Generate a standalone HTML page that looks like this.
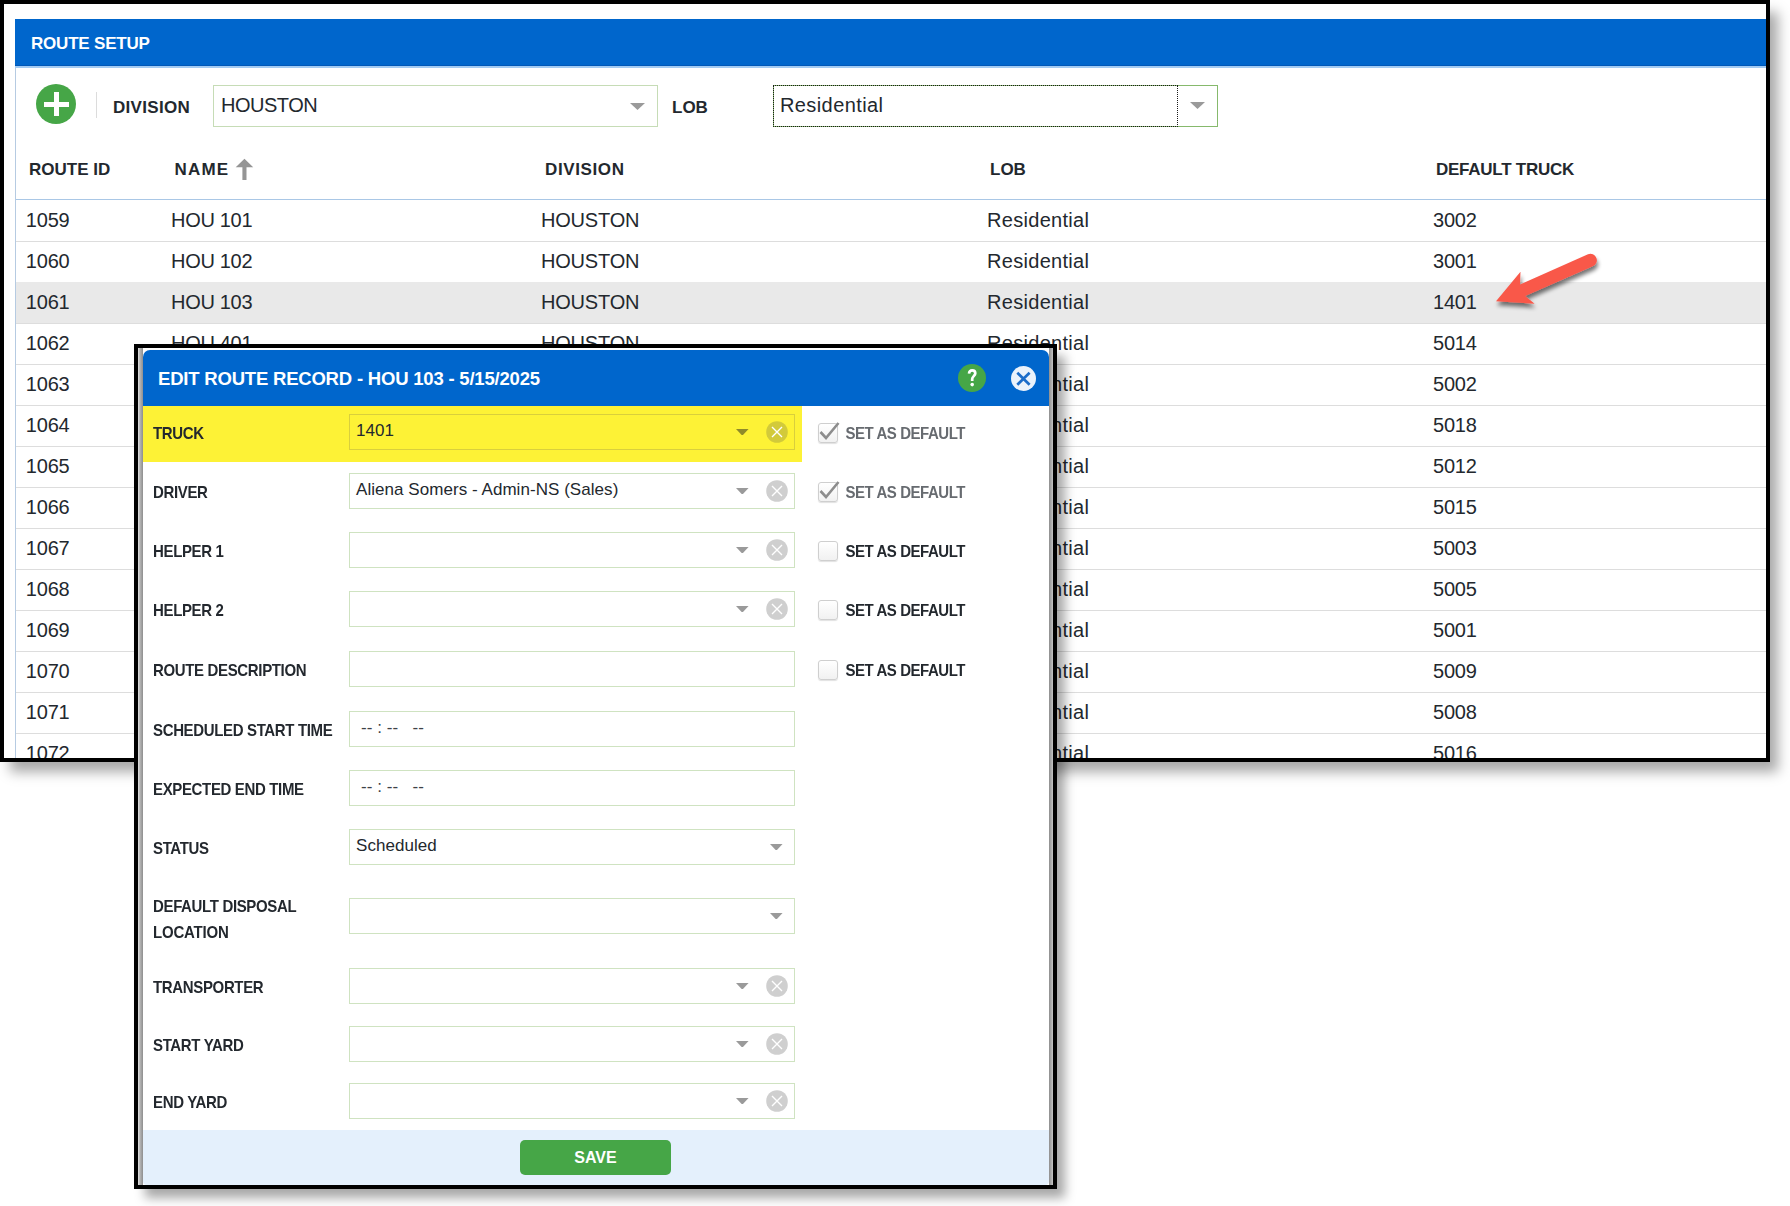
<!DOCTYPE html><html><head><meta charset="utf-8"><style>
html,body{margin:0;padding:0;background:#fff;width:1790px;height:1206px;overflow:hidden;font-family:"Liberation Sans", sans-serif;}
.frame{position:absolute;box-sizing:border-box;border:4px solid #000;background:#fff;overflow:hidden;}
.inner{position:absolute;}
</style></head><body>
<div class="frame" style="left:0;top:0;width:1770px;height:762px;box-shadow:9px 11px 12px -1px rgba(0,0,0,.34)">
<div class="inner" style="left:-4px;top:-4px;width:1790px;height:800px">
<div style="position:absolute;left:15px;top:19px;width:1760px;height:47px;background:#0066cc"></div>
<div style="position:absolute;left:15px;top:65px;width:1760px;height:1px;background:#0058b8"></div><div style="position:absolute;left:15px;top:66px;width:1760px;height:2px;background:#a3cbf3"></div>
<div style="position:absolute;left:15px;top:68px;width:1px;height:700px;background:#b6cbe2"></div>
<div style="position:absolute;left:31px;top:23.5px;height:40px;line-height:40px;font-size:17px;font-weight:bold;color:#fff;letter-spacing:-0.2px;white-space:pre;">ROUTE SETUP</div>
<div style="position:absolute;left:36px;top:84px;width:40px;height:40px;border-radius:50%;background:#46a647"></div>
<div style="position:absolute;left:44px;top:101.5px;width:25px;height:5px;background:#fff"></div>
<div style="position:absolute;left:53.5px;top:92px;width:5px;height:24px;background:#fff"></div>
<div style="position:absolute;left:96px;top:92px;width:1px;height:26px;background:#dcdcdc"></div>
<div style="position:absolute;left:113px;top:87.5px;height:40px;line-height:40px;font-size:17px;font-weight:bold;color:#23282e;letter-spacing:0.3px;white-space:pre;">DIVISION</div>
<div style="position:absolute;left:213px;top:85px;width:445px;height:42px;box-sizing:border-box;border:1px solid #c6dcb6"></div>
<div style="position:absolute;left:221px;top:84.8px;height:40px;line-height:40px;font-size:20px;font-weight:normal;color:#23282e;letter-spacing:-0.5px;white-space:pre;">HOUSTON</div>
<svg style="position:absolute;left:630px;top:102.5px" width="15" height="7.0" viewBox="0 0 15 7.0"><path d="M0 0H15L7.5 7.0Z" fill="#9a9a9a"/></svg>
<div style="position:absolute;left:672px;top:87.7px;height:40px;line-height:40px;font-size:17px;font-weight:bold;color:#23282e;letter-spacing:0px;white-space:pre;">LOB</div>
<div style="position:absolute;left:773px;top:85px;width:445px;height:42px;box-sizing:border-box;border:1px solid #86b96c"></div>
<div style="position:absolute;left:773px;top:85px;width:405px;height:42px;box-sizing:border-box;border:1px dotted #1a1a1a"></div>
<div style="position:absolute;left:780px;top:84.9px;height:40px;line-height:40px;font-size:20px;font-weight:normal;color:#23282e;letter-spacing:0.4px;white-space:pre;">Residential</div>
<svg style="position:absolute;left:1190px;top:102.3px" width="15" height="7.0" viewBox="0 0 15 7.0"><path d="M0 0H15L7.5 7.0Z" fill="#9a9a9a"/></svg>
<div style="position:absolute;left:29px;top:150.4px;height:40px;line-height:40px;font-size:17px;font-weight:bold;color:#23282e;letter-spacing:0px;white-space:pre;">ROUTE ID</div>
<div style="position:absolute;left:174.5px;top:150.4px;height:40px;line-height:40px;font-size:17px;font-weight:bold;color:#23282e;letter-spacing:1.2px;white-space:pre;">NAME</div>
<div style="position:absolute;left:545px;top:150.4px;height:40px;line-height:40px;font-size:17px;font-weight:bold;color:#23282e;letter-spacing:0.62px;white-space:pre;">DIVISION</div>
<div style="position:absolute;left:990px;top:150.4px;height:40px;line-height:40px;font-size:17px;font-weight:bold;color:#23282e;letter-spacing:0px;white-space:pre;">LOB</div>
<div style="position:absolute;left:1436px;top:150.4px;height:40px;line-height:40px;font-size:17px;font-weight:bold;color:#23282e;letter-spacing:-0.25px;white-space:pre;">DEFAULT TRUCK</div>
<svg style="position:absolute;left:235px;top:158px" width="19" height="23" viewBox="0 0 19 23"><path d="M9.45 0.8L18.2 9.3H11.5V21.9H7.4V9.3H0.7Z" fill="#959595"/></svg>
<div style="position:absolute;left:16px;top:199px;width:1760px;height:1px;background:#a9c7e6"></div>
<div style="position:absolute;left:16px;top:241px;width:1760px;height:1px;background:#dddddd"></div>
<div style="position:absolute;left:25.8px;top:200.0px;height:40px;line-height:40px;font-size:20px;font-weight:normal;color:#23282e;letter-spacing:-0.2px;white-space:pre;">1059</div>
<div style="position:absolute;left:171px;top:200.0px;height:40px;line-height:40px;font-size:20px;font-weight:normal;color:#23282e;letter-spacing:-0.3px;white-space:pre;">HOU 101</div>
<div style="position:absolute;left:541px;top:200.0px;height:40px;line-height:40px;font-size:20px;font-weight:normal;color:#23282e;letter-spacing:-0.2px;white-space:pre;">HOUSTON</div>
<div style="position:absolute;left:987px;top:200.0px;height:40px;line-height:40px;font-size:20px;font-weight:normal;color:#23282e;letter-spacing:0.3px;white-space:pre;">Residential</div>
<div style="position:absolute;left:1433px;top:200.0px;height:40px;line-height:40px;font-size:20px;font-weight:normal;color:#23282e;letter-spacing:-0.2px;white-space:pre;">3002</div>
<div style="position:absolute;left:16px;top:282px;width:1760px;height:1px;background:#dddddd"></div>
<div style="position:absolute;left:25.8px;top:241.0px;height:40px;line-height:40px;font-size:20px;font-weight:normal;color:#23282e;letter-spacing:-0.2px;white-space:pre;">1060</div>
<div style="position:absolute;left:171px;top:241.0px;height:40px;line-height:40px;font-size:20px;font-weight:normal;color:#23282e;letter-spacing:-0.3px;white-space:pre;">HOU 102</div>
<div style="position:absolute;left:541px;top:241.0px;height:40px;line-height:40px;font-size:20px;font-weight:normal;color:#23282e;letter-spacing:-0.2px;white-space:pre;">HOUSTON</div>
<div style="position:absolute;left:987px;top:241.0px;height:40px;line-height:40px;font-size:20px;font-weight:normal;color:#23282e;letter-spacing:0.3px;white-space:pre;">Residential</div>
<div style="position:absolute;left:1433px;top:241.0px;height:40px;line-height:40px;font-size:20px;font-weight:normal;color:#23282e;letter-spacing:-0.2px;white-space:pre;">3001</div>
<div style="position:absolute;left:16px;top:282px;width:1760px;height:41px;background:#e9e9e9"></div>
<div style="position:absolute;left:16px;top:323px;width:1760px;height:1px;background:#dddddd"></div>
<div style="position:absolute;left:25.8px;top:282.0px;height:40px;line-height:40px;font-size:20px;font-weight:normal;color:#23282e;letter-spacing:-0.2px;white-space:pre;">1061</div>
<div style="position:absolute;left:171px;top:282.0px;height:40px;line-height:40px;font-size:20px;font-weight:normal;color:#23282e;letter-spacing:-0.3px;white-space:pre;">HOU 103</div>
<div style="position:absolute;left:541px;top:282.0px;height:40px;line-height:40px;font-size:20px;font-weight:normal;color:#23282e;letter-spacing:-0.2px;white-space:pre;">HOUSTON</div>
<div style="position:absolute;left:987px;top:282.0px;height:40px;line-height:40px;font-size:20px;font-weight:normal;color:#23282e;letter-spacing:0.3px;white-space:pre;">Residential</div>
<div style="position:absolute;left:1433px;top:282.0px;height:40px;line-height:40px;font-size:20px;font-weight:normal;color:#23282e;letter-spacing:-0.2px;white-space:pre;">1401</div>
<div style="position:absolute;left:16px;top:364px;width:1760px;height:1px;background:#dddddd"></div>
<div style="position:absolute;left:25.8px;top:323.0px;height:40px;line-height:40px;font-size:20px;font-weight:normal;color:#23282e;letter-spacing:-0.2px;white-space:pre;">1062</div>
<div style="position:absolute;left:171px;top:323.0px;height:40px;line-height:40px;font-size:20px;font-weight:normal;color:#23282e;letter-spacing:-0.3px;white-space:pre;">HOU 401</div>
<div style="position:absolute;left:541px;top:323.0px;height:40px;line-height:40px;font-size:20px;font-weight:normal;color:#23282e;letter-spacing:-0.2px;white-space:pre;">HOUSTON</div>
<div style="position:absolute;left:987px;top:323.0px;height:40px;line-height:40px;font-size:20px;font-weight:normal;color:#23282e;letter-spacing:0.3px;white-space:pre;">Residential</div>
<div style="position:absolute;left:1433px;top:323.0px;height:40px;line-height:40px;font-size:20px;font-weight:normal;color:#23282e;letter-spacing:-0.2px;white-space:pre;">5014</div>
<div style="position:absolute;left:16px;top:405px;width:1760px;height:1px;background:#dddddd"></div>
<div style="position:absolute;left:25.8px;top:364.0px;height:40px;line-height:40px;font-size:20px;font-weight:normal;color:#23282e;letter-spacing:-0.2px;white-space:pre;">1063</div>
<div style="position:absolute;left:171px;top:364.0px;height:40px;line-height:40px;font-size:20px;font-weight:normal;color:#23282e;letter-spacing:-0.3px;white-space:pre;">HOU 402</div>
<div style="position:absolute;left:541px;top:364.0px;height:40px;line-height:40px;font-size:20px;font-weight:normal;color:#23282e;letter-spacing:-0.2px;white-space:pre;">HOUSTON</div>
<div style="position:absolute;left:987px;top:364.0px;height:40px;line-height:40px;font-size:20px;font-weight:normal;color:#23282e;letter-spacing:0.3px;white-space:pre;">Residential</div>
<div style="position:absolute;left:1433px;top:364.0px;height:40px;line-height:40px;font-size:20px;font-weight:normal;color:#23282e;letter-spacing:-0.2px;white-space:pre;">5002</div>
<div style="position:absolute;left:16px;top:446px;width:1760px;height:1px;background:#dddddd"></div>
<div style="position:absolute;left:25.8px;top:405.0px;height:40px;line-height:40px;font-size:20px;font-weight:normal;color:#23282e;letter-spacing:-0.2px;white-space:pre;">1064</div>
<div style="position:absolute;left:171px;top:405.0px;height:40px;line-height:40px;font-size:20px;font-weight:normal;color:#23282e;letter-spacing:-0.3px;white-space:pre;">HOU 403</div>
<div style="position:absolute;left:541px;top:405.0px;height:40px;line-height:40px;font-size:20px;font-weight:normal;color:#23282e;letter-spacing:-0.2px;white-space:pre;">HOUSTON</div>
<div style="position:absolute;left:987px;top:405.0px;height:40px;line-height:40px;font-size:20px;font-weight:normal;color:#23282e;letter-spacing:0.3px;white-space:pre;">Residential</div>
<div style="position:absolute;left:1433px;top:405.0px;height:40px;line-height:40px;font-size:20px;font-weight:normal;color:#23282e;letter-spacing:-0.2px;white-space:pre;">5018</div>
<div style="position:absolute;left:16px;top:487px;width:1760px;height:1px;background:#dddddd"></div>
<div style="position:absolute;left:25.8px;top:446.0px;height:40px;line-height:40px;font-size:20px;font-weight:normal;color:#23282e;letter-spacing:-0.2px;white-space:pre;">1065</div>
<div style="position:absolute;left:171px;top:446.0px;height:40px;line-height:40px;font-size:20px;font-weight:normal;color:#23282e;letter-spacing:-0.3px;white-space:pre;">HOU 404</div>
<div style="position:absolute;left:541px;top:446.0px;height:40px;line-height:40px;font-size:20px;font-weight:normal;color:#23282e;letter-spacing:-0.2px;white-space:pre;">HOUSTON</div>
<div style="position:absolute;left:987px;top:446.0px;height:40px;line-height:40px;font-size:20px;font-weight:normal;color:#23282e;letter-spacing:0.3px;white-space:pre;">Residential</div>
<div style="position:absolute;left:1433px;top:446.0px;height:40px;line-height:40px;font-size:20px;font-weight:normal;color:#23282e;letter-spacing:-0.2px;white-space:pre;">5012</div>
<div style="position:absolute;left:16px;top:528px;width:1760px;height:1px;background:#dddddd"></div>
<div style="position:absolute;left:25.8px;top:487.0px;height:40px;line-height:40px;font-size:20px;font-weight:normal;color:#23282e;letter-spacing:-0.2px;white-space:pre;">1066</div>
<div style="position:absolute;left:171px;top:487.0px;height:40px;line-height:40px;font-size:20px;font-weight:normal;color:#23282e;letter-spacing:-0.3px;white-space:pre;">HOU 405</div>
<div style="position:absolute;left:541px;top:487.0px;height:40px;line-height:40px;font-size:20px;font-weight:normal;color:#23282e;letter-spacing:-0.2px;white-space:pre;">HOUSTON</div>
<div style="position:absolute;left:987px;top:487.0px;height:40px;line-height:40px;font-size:20px;font-weight:normal;color:#23282e;letter-spacing:0.3px;white-space:pre;">Residential</div>
<div style="position:absolute;left:1433px;top:487.0px;height:40px;line-height:40px;font-size:20px;font-weight:normal;color:#23282e;letter-spacing:-0.2px;white-space:pre;">5015</div>
<div style="position:absolute;left:16px;top:569px;width:1760px;height:1px;background:#dddddd"></div>
<div style="position:absolute;left:25.8px;top:528.0px;height:40px;line-height:40px;font-size:20px;font-weight:normal;color:#23282e;letter-spacing:-0.2px;white-space:pre;">1067</div>
<div style="position:absolute;left:171px;top:528.0px;height:40px;line-height:40px;font-size:20px;font-weight:normal;color:#23282e;letter-spacing:-0.3px;white-space:pre;">HOU 406</div>
<div style="position:absolute;left:541px;top:528.0px;height:40px;line-height:40px;font-size:20px;font-weight:normal;color:#23282e;letter-spacing:-0.2px;white-space:pre;">HOUSTON</div>
<div style="position:absolute;left:987px;top:528.0px;height:40px;line-height:40px;font-size:20px;font-weight:normal;color:#23282e;letter-spacing:0.3px;white-space:pre;">Residential</div>
<div style="position:absolute;left:1433px;top:528.0px;height:40px;line-height:40px;font-size:20px;font-weight:normal;color:#23282e;letter-spacing:-0.2px;white-space:pre;">5003</div>
<div style="position:absolute;left:16px;top:610px;width:1760px;height:1px;background:#dddddd"></div>
<div style="position:absolute;left:25.8px;top:569.0px;height:40px;line-height:40px;font-size:20px;font-weight:normal;color:#23282e;letter-spacing:-0.2px;white-space:pre;">1068</div>
<div style="position:absolute;left:171px;top:569.0px;height:40px;line-height:40px;font-size:20px;font-weight:normal;color:#23282e;letter-spacing:-0.3px;white-space:pre;">HOU 407</div>
<div style="position:absolute;left:541px;top:569.0px;height:40px;line-height:40px;font-size:20px;font-weight:normal;color:#23282e;letter-spacing:-0.2px;white-space:pre;">HOUSTON</div>
<div style="position:absolute;left:987px;top:569.0px;height:40px;line-height:40px;font-size:20px;font-weight:normal;color:#23282e;letter-spacing:0.3px;white-space:pre;">Residential</div>
<div style="position:absolute;left:1433px;top:569.0px;height:40px;line-height:40px;font-size:20px;font-weight:normal;color:#23282e;letter-spacing:-0.2px;white-space:pre;">5005</div>
<div style="position:absolute;left:16px;top:651px;width:1760px;height:1px;background:#dddddd"></div>
<div style="position:absolute;left:25.8px;top:610.0px;height:40px;line-height:40px;font-size:20px;font-weight:normal;color:#23282e;letter-spacing:-0.2px;white-space:pre;">1069</div>
<div style="position:absolute;left:171px;top:610.0px;height:40px;line-height:40px;font-size:20px;font-weight:normal;color:#23282e;letter-spacing:-0.3px;white-space:pre;">HOU 408</div>
<div style="position:absolute;left:541px;top:610.0px;height:40px;line-height:40px;font-size:20px;font-weight:normal;color:#23282e;letter-spacing:-0.2px;white-space:pre;">HOUSTON</div>
<div style="position:absolute;left:987px;top:610.0px;height:40px;line-height:40px;font-size:20px;font-weight:normal;color:#23282e;letter-spacing:0.3px;white-space:pre;">Residential</div>
<div style="position:absolute;left:1433px;top:610.0px;height:40px;line-height:40px;font-size:20px;font-weight:normal;color:#23282e;letter-spacing:-0.2px;white-space:pre;">5001</div>
<div style="position:absolute;left:16px;top:692px;width:1760px;height:1px;background:#dddddd"></div>
<div style="position:absolute;left:25.8px;top:651.0px;height:40px;line-height:40px;font-size:20px;font-weight:normal;color:#23282e;letter-spacing:-0.2px;white-space:pre;">1070</div>
<div style="position:absolute;left:171px;top:651.0px;height:40px;line-height:40px;font-size:20px;font-weight:normal;color:#23282e;letter-spacing:-0.3px;white-space:pre;">HOU 409</div>
<div style="position:absolute;left:541px;top:651.0px;height:40px;line-height:40px;font-size:20px;font-weight:normal;color:#23282e;letter-spacing:-0.2px;white-space:pre;">HOUSTON</div>
<div style="position:absolute;left:987px;top:651.0px;height:40px;line-height:40px;font-size:20px;font-weight:normal;color:#23282e;letter-spacing:0.3px;white-space:pre;">Residential</div>
<div style="position:absolute;left:1433px;top:651.0px;height:40px;line-height:40px;font-size:20px;font-weight:normal;color:#23282e;letter-spacing:-0.2px;white-space:pre;">5009</div>
<div style="position:absolute;left:16px;top:733px;width:1760px;height:1px;background:#dddddd"></div>
<div style="position:absolute;left:25.8px;top:692.0px;height:40px;line-height:40px;font-size:20px;font-weight:normal;color:#23282e;letter-spacing:-0.2px;white-space:pre;">1071</div>
<div style="position:absolute;left:171px;top:692.0px;height:40px;line-height:40px;font-size:20px;font-weight:normal;color:#23282e;letter-spacing:-0.3px;white-space:pre;">HOU 410</div>
<div style="position:absolute;left:541px;top:692.0px;height:40px;line-height:40px;font-size:20px;font-weight:normal;color:#23282e;letter-spacing:-0.2px;white-space:pre;">HOUSTON</div>
<div style="position:absolute;left:987px;top:692.0px;height:40px;line-height:40px;font-size:20px;font-weight:normal;color:#23282e;letter-spacing:0.3px;white-space:pre;">Residential</div>
<div style="position:absolute;left:1433px;top:692.0px;height:40px;line-height:40px;font-size:20px;font-weight:normal;color:#23282e;letter-spacing:-0.2px;white-space:pre;">5008</div>
<div style="position:absolute;left:16px;top:774px;width:1760px;height:1px;background:#dddddd"></div>
<div style="position:absolute;left:25.8px;top:733.0px;height:40px;line-height:40px;font-size:20px;font-weight:normal;color:#23282e;letter-spacing:-0.2px;white-space:pre;">1072</div>
<div style="position:absolute;left:171px;top:733.0px;height:40px;line-height:40px;font-size:20px;font-weight:normal;color:#23282e;letter-spacing:-0.3px;white-space:pre;">HOU 411</div>
<div style="position:absolute;left:541px;top:733.0px;height:40px;line-height:40px;font-size:20px;font-weight:normal;color:#23282e;letter-spacing:-0.2px;white-space:pre;">HOUSTON</div>
<div style="position:absolute;left:987px;top:733.0px;height:40px;line-height:40px;font-size:20px;font-weight:normal;color:#23282e;letter-spacing:0.3px;white-space:pre;">Residential</div>
<div style="position:absolute;left:1433px;top:733.0px;height:40px;line-height:40px;font-size:20px;font-weight:normal;color:#23282e;letter-spacing:-0.2px;white-space:pre;">5016</div>
<svg style="position:absolute;left:1480px;top:240px" width="130" height="85" viewBox="1480 240 130 85">
<defs><filter id="ds" x="-30%" y="-30%" width="160%" height="160%"><feGaussianBlur in="SourceAlpha" stdDeviation="2.2"/><feOffset dx="1" dy="4"/><feComponentTransfer><feFuncA type="linear" slope="0.55"/></feComponentTransfer><feMerge><feMergeNode/><feMergeNode in="SourceGraphic"/></feMerge></filter></defs>
<path filter="url(#ds)" d="M1496 301.3 L1520.5 271.8 L1520 284.6 L1588 254.3 A6.4 6.4 0 0 1 1592.8 266.3 L1525.2 296 L1534.6 303.7 Z" fill="#f9584a"/>
</svg>
</div></div>
<div class="frame" style="left:134px;top:344px;width:923px;height:845px;box-shadow:9.5px 10.5px 10px -1.5px rgba(0,0,0,.34)">
<div class="inner" style="left:-138px;top:-348px;width:1790px;height:1206px">
<div style="position:absolute;left:138px;top:348px;width:5px;height:840px;background:linear-gradient(90deg,#e2e2e2,#b5b5b5 40%,#8e8e8e)"></div>
<div style="position:absolute;left:1049px;top:348px;width:5px;height:840px;background:linear-gradient(90deg,#8e8e8e,#b5b5b5 60%,#d8d8d8)"></div>
<div style="position:absolute;left:143px;top:350px;width:906px;height:840px;background:#fff"></div>
<div style="position:absolute;left:143px;top:350px;width:906px;height:56px;background:#0066cc;border-radius:7px 7px 0 0"></div>
<div style="position:absolute;left:158px;top:359.0px;height:40px;line-height:40px;font-size:18.5px;font-weight:bold;color:#fff;letter-spacing:-0.2px;white-space:pre;">EDIT ROUTE RECORD - HOU 103 - 5/15/2025</div>
<div style="position:absolute;left:958px;top:363.6px;width:28px;height:28px;border-radius:50%;background:#46a647"></div>
<svg style="position:absolute;left:958px;top:363.6px" width="28" height="28" viewBox="958 363.6 28 28"><path d="M969 373.2C969.2 371 970.5 369.9 972.2 369.9C974.1 369.9 975.3 371.2 975.3 372.9C975.3 375.5 972.2 376 972.2 378.6V380.6" stroke="#fff" stroke-width="2.7" fill="none" stroke-linecap="butt"/><circle cx="972.2" cy="384.2" r="1.8" fill="#fff"/></svg>
<svg style="position:absolute;left:1011px;top:365.5px" width="25" height="25" viewBox="0 0 25 25"><circle cx="12.5" cy="12.5" r="12.5" fill="#eaf2fb"/><path d="M6.3 6.7L18.6 18.7M18.6 6.7L6.3 18.7" stroke="#1b6cc9" stroke-width="2.7"/></svg>
<div style="position:absolute;left:143px;top:406px;width:659px;height:56px;background:#fdf236"></div>
<div style="position:absolute;left:153px;top:412.5px;height:40px;line-height:40px;font-size:15px;font-weight:bold;color:#23282e;letter-spacing:-0.35px;white-space:pre;transform:scaleY(1.1)">TRUCK</div>
<div style="position:absolute;left:349px;top:414px;width:446px;height:36px;box-sizing:border-box;border:1px solid #d9cf3c;background:transparent"></div>
<div style="position:absolute;left:356px;top:410.5px;height:40px;line-height:40px;font-size:17px;font-weight:normal;color:#23282e;letter-spacing:0.05px;white-space:pre;">1401</div>
<svg style="position:absolute;left:736px;top:428.8px" width="12.600000000000023" height="6.699999999999989" viewBox="0 0 12.600000000000023 6.699999999999989"><path d="M0 0H12.600000000000023L6.300000000000011 6.699999999999989Z" fill="#8f8a2a"/></svg>
<svg style="position:absolute;left:766px;top:421.4px" width="22" height="22" viewBox="0 0 22 22"><circle cx="11" cy="11" r="10.8" fill="#d2ca3a"/><path d="M6 6L16 16M16 6L6 16" stroke="#fff" stroke-width="1.35"/></svg>
<div style="position:absolute;left:818px;top:422.5px;width:20px;height:20px;box-sizing:border-box;border:1px solid #cfcfcf;border-radius:3px;background:linear-gradient(#fff,#f1f1f1);box-shadow:0 1px 1px rgba(0,0,0,.12)"></div>
<svg style="position:absolute;left:817px;top:419.0px" width="24" height="24" viewBox="0 0 24 24"><path d="M3.5 13L9 19L21.5 4" stroke="#8d8d8d" stroke-width="2.6" fill="none"/></svg>
<div style="position:absolute;left:845.5px;top:412.7px;height:40px;line-height:40px;font-size:15px;font-weight:bold;color:#676b70;letter-spacing:-0.45px;white-space:pre;transform:scaleY(1.1)">SET AS DEFAULT</div>
<div style="position:absolute;left:153px;top:471.5px;height:40px;line-height:40px;font-size:15px;font-weight:bold;color:#23282e;letter-spacing:-0.35px;white-space:pre;transform:scaleY(1.1)">DRIVER</div>
<div style="position:absolute;left:349px;top:473px;width:446px;height:36px;box-sizing:border-box;border:1px solid #cfe3c1;background:#fff"></div>
<div style="position:absolute;left:356px;top:469.5px;height:40px;line-height:40px;font-size:17px;font-weight:normal;color:#23282e;letter-spacing:0.05px;white-space:pre;">Aliena Somers - Admin-NS (Sales)</div>
<svg style="position:absolute;left:736px;top:487.8px" width="12.600000000000023" height="6.699999999999989" viewBox="0 0 12.600000000000023 6.699999999999989"><path d="M0 0H12.600000000000023L6.300000000000011 6.699999999999989Z" fill="#9a9a9a"/></svg>
<svg style="position:absolute;left:766px;top:480.4px" width="22" height="22" viewBox="0 0 22 22"><circle cx="11" cy="11" r="10.8" fill="#cfcfcf"/><path d="M6 6L16 16M16 6L6 16" stroke="#fff" stroke-width="1.35"/></svg>
<div style="position:absolute;left:818px;top:481.5px;width:20px;height:20px;box-sizing:border-box;border:1px solid #cfcfcf;border-radius:3px;background:linear-gradient(#fff,#f1f1f1);box-shadow:0 1px 1px rgba(0,0,0,.12)"></div>
<svg style="position:absolute;left:817px;top:478.0px" width="24" height="24" viewBox="0 0 24 24"><path d="M3.5 13L9 19L21.5 4" stroke="#8d8d8d" stroke-width="2.6" fill="none"/></svg>
<div style="position:absolute;left:845.5px;top:471.7px;height:40px;line-height:40px;font-size:15px;font-weight:bold;color:#676b70;letter-spacing:-0.45px;white-space:pre;transform:scaleY(1.1)">SET AS DEFAULT</div>
<div style="position:absolute;left:153px;top:530.5px;height:40px;line-height:40px;font-size:15px;font-weight:bold;color:#23282e;letter-spacing:-0.35px;white-space:pre;transform:scaleY(1.1)">HELPER 1</div>
<div style="position:absolute;left:349px;top:532px;width:446px;height:36px;box-sizing:border-box;border:1px solid #cfe3c1;background:#fff"></div>
<svg style="position:absolute;left:736px;top:546.8px" width="12.600000000000023" height="6.7000000000000455" viewBox="0 0 12.600000000000023 6.7000000000000455"><path d="M0 0H12.600000000000023L6.300000000000011 6.7000000000000455Z" fill="#9a9a9a"/></svg>
<svg style="position:absolute;left:766px;top:539.4px" width="22" height="22" viewBox="0 0 22 22"><circle cx="11" cy="11" r="10.8" fill="#cfcfcf"/><path d="M6 6L16 16M16 6L6 16" stroke="#fff" stroke-width="1.35"/></svg>
<div style="position:absolute;left:818px;top:540.5px;width:20px;height:20px;box-sizing:border-box;border:1px solid #cfcfcf;border-radius:3px;background:linear-gradient(#fff,#f1f1f1);box-shadow:0 1px 1px rgba(0,0,0,.12)"></div>
<div style="position:absolute;left:845.5px;top:530.7px;height:40px;line-height:40px;font-size:15px;font-weight:bold;color:#23282e;letter-spacing:-0.45px;white-space:pre;transform:scaleY(1.1)">SET AS DEFAULT</div>
<div style="position:absolute;left:153px;top:589.5px;height:40px;line-height:40px;font-size:15px;font-weight:bold;color:#23282e;letter-spacing:-0.35px;white-space:pre;transform:scaleY(1.1)">HELPER 2</div>
<div style="position:absolute;left:349px;top:591px;width:446px;height:36px;box-sizing:border-box;border:1px solid #cfe3c1;background:#fff"></div>
<svg style="position:absolute;left:736px;top:605.8px" width="12.600000000000023" height="6.7000000000000455" viewBox="0 0 12.600000000000023 6.7000000000000455"><path d="M0 0H12.600000000000023L6.300000000000011 6.7000000000000455Z" fill="#9a9a9a"/></svg>
<svg style="position:absolute;left:766px;top:598.4px" width="22" height="22" viewBox="0 0 22 22"><circle cx="11" cy="11" r="10.8" fill="#cfcfcf"/><path d="M6 6L16 16M16 6L6 16" stroke="#fff" stroke-width="1.35"/></svg>
<div style="position:absolute;left:818px;top:599.5px;width:20px;height:20px;box-sizing:border-box;border:1px solid #cfcfcf;border-radius:3px;background:linear-gradient(#fff,#f1f1f1);box-shadow:0 1px 1px rgba(0,0,0,.12)"></div>
<div style="position:absolute;left:845.5px;top:589.7px;height:40px;line-height:40px;font-size:15px;font-weight:bold;color:#23282e;letter-spacing:-0.45px;white-space:pre;transform:scaleY(1.1)">SET AS DEFAULT</div>
<div style="position:absolute;left:153px;top:649.5px;height:40px;line-height:40px;font-size:15px;font-weight:bold;color:#23282e;letter-spacing:-0.35px;white-space:pre;transform:scaleY(1.1)">ROUTE DESCRIPTION</div>
<div style="position:absolute;left:349px;top:651px;width:446px;height:36px;box-sizing:border-box;border:1px solid #cfe3c1;background:#fff"></div>
<div style="position:absolute;left:818px;top:659.5px;width:20px;height:20px;box-sizing:border-box;border:1px solid #cfcfcf;border-radius:3px;background:linear-gradient(#fff,#f1f1f1);box-shadow:0 1px 1px rgba(0,0,0,.12)"></div>
<div style="position:absolute;left:845.5px;top:649.7px;height:40px;line-height:40px;font-size:15px;font-weight:bold;color:#23282e;letter-spacing:-0.45px;white-space:pre;transform:scaleY(1.1)">SET AS DEFAULT</div>
<div style="position:absolute;left:153px;top:709.5px;height:40px;line-height:40px;font-size:15px;font-weight:bold;color:#23282e;letter-spacing:-0.35px;white-space:pre;transform:scaleY(1.1)">SCHEDULED START TIME</div>
<div style="position:absolute;left:349px;top:711px;width:446px;height:36px;box-sizing:border-box;border:1px solid #cfe3c1;background:#fff"></div>
<div style="position:absolute;left:361px;top:707.5px;height:40px;line-height:40px;font-size:17px;font-weight:normal;color:#3d4247;letter-spacing:0.05px;white-space:pre;">-- : --   --</div>
<div style="position:absolute;left:153px;top:768.5px;height:40px;line-height:40px;font-size:15px;font-weight:bold;color:#23282e;letter-spacing:-0.35px;white-space:pre;transform:scaleY(1.1)">EXPECTED END TIME</div>
<div style="position:absolute;left:349px;top:770px;width:446px;height:36px;box-sizing:border-box;border:1px solid #cfe3c1;background:#fff"></div>
<div style="position:absolute;left:361px;top:766.5px;height:40px;line-height:40px;font-size:17px;font-weight:normal;color:#3d4247;letter-spacing:0.05px;white-space:pre;">-- : --   --</div>
<div style="position:absolute;left:153px;top:827.5px;height:40px;line-height:40px;font-size:15px;font-weight:bold;color:#23282e;letter-spacing:-0.35px;white-space:pre;transform:scaleY(1.1)">STATUS</div>
<div style="position:absolute;left:349px;top:829px;width:446px;height:36px;box-sizing:border-box;border:1px solid #cfe3c1;background:#fff"></div>
<div style="position:absolute;left:356px;top:825.5px;height:40px;line-height:40px;font-size:17px;font-weight:normal;color:#23282e;letter-spacing:0.05px;white-space:pre;">Scheduled</div>
<svg style="position:absolute;left:770.4px;top:843.8px" width="12.600000000000023" height="6.7000000000000455" viewBox="0 0 12.600000000000023 6.7000000000000455"><path d="M0 0H12.600000000000023L6.300000000000011 6.7000000000000455Z" fill="#9a9a9a"/></svg>
<div style="position:absolute;left:153px;top:886.0px;height:40px;line-height:40px;font-size:15px;font-weight:bold;color:#23282e;letter-spacing:-0.35px;white-space:pre;transform:scaleY(1.1)">DEFAULT DISPOSAL</div>
<div style="position:absolute;left:153px;top:912.4px;height:40px;line-height:40px;font-size:15px;font-weight:bold;color:#23282e;letter-spacing:-0.2px;white-space:pre;transform:scaleY(1.1)">LOCATION</div>
<div style="position:absolute;left:349px;top:898px;width:446px;height:36px;box-sizing:border-box;border:1px solid #cfe3c1;background:#fff"></div>
<svg style="position:absolute;left:770.4px;top:912.8px" width="12.600000000000023" height="6.7000000000000455" viewBox="0 0 12.600000000000023 6.7000000000000455"><path d="M0 0H12.600000000000023L6.300000000000011 6.7000000000000455Z" fill="#9a9a9a"/></svg>
<div style="position:absolute;left:153px;top:966.5px;height:40px;line-height:40px;font-size:15px;font-weight:bold;color:#23282e;letter-spacing:-0.35px;white-space:pre;transform:scaleY(1.1)">TRANSPORTER</div>
<div style="position:absolute;left:349px;top:968px;width:446px;height:36px;box-sizing:border-box;border:1px solid #cfe3c1;background:#fff"></div>
<svg style="position:absolute;left:736px;top:982.8px" width="12.600000000000023" height="6.7000000000000455" viewBox="0 0 12.600000000000023 6.7000000000000455"><path d="M0 0H12.600000000000023L6.300000000000011 6.7000000000000455Z" fill="#9a9a9a"/></svg>
<svg style="position:absolute;left:766px;top:975.4px" width="22" height="22" viewBox="0 0 22 22"><circle cx="11" cy="11" r="10.8" fill="#cfcfcf"/><path d="M6 6L16 16M16 6L6 16" stroke="#fff" stroke-width="1.35"/></svg>
<div style="position:absolute;left:153px;top:1024.5px;height:40px;line-height:40px;font-size:15px;font-weight:bold;color:#23282e;letter-spacing:-0.35px;white-space:pre;transform:scaleY(1.1)">START YARD</div>
<div style="position:absolute;left:349px;top:1026px;width:446px;height:36px;box-sizing:border-box;border:1px solid #cfe3c1;background:#fff"></div>
<svg style="position:absolute;left:736px;top:1040.8px" width="12.600000000000023" height="6.7000000000000455" viewBox="0 0 12.600000000000023 6.7000000000000455"><path d="M0 0H12.600000000000023L6.300000000000011 6.7000000000000455Z" fill="#9a9a9a"/></svg>
<svg style="position:absolute;left:766px;top:1033.4px" width="22" height="22" viewBox="0 0 22 22"><circle cx="11" cy="11" r="10.8" fill="#cfcfcf"/><path d="M6 6L16 16M16 6L6 16" stroke="#fff" stroke-width="1.35"/></svg>
<div style="position:absolute;left:153px;top:1081.5px;height:40px;line-height:40px;font-size:15px;font-weight:bold;color:#23282e;letter-spacing:-0.35px;white-space:pre;transform:scaleY(1.1)">END YARD</div>
<div style="position:absolute;left:349px;top:1083px;width:446px;height:36px;box-sizing:border-box;border:1px solid #cfe3c1;background:#fff"></div>
<svg style="position:absolute;left:736px;top:1097.8px" width="12.600000000000023" height="6.7000000000000455" viewBox="0 0 12.600000000000023 6.7000000000000455"><path d="M0 0H12.600000000000023L6.300000000000011 6.7000000000000455Z" fill="#9a9a9a"/></svg>
<svg style="position:absolute;left:766px;top:1090.4px" width="22" height="22" viewBox="0 0 22 22"><circle cx="11" cy="11" r="10.8" fill="#cfcfcf"/><path d="M6 6L16 16M16 6L6 16" stroke="#fff" stroke-width="1.35"/></svg>
<div style="position:absolute;left:143px;top:1130px;width:906px;height:55px;background:#e4f0fc;border-radius:0 0 4px 4px"></div>
<div style="position:absolute;left:520px;top:1140px;width:151px;height:35px;border-radius:5px;background:#46a647"></div>
<div style="position:absolute;left:520px;top:1138.0px;height:40px;line-height:40px;font-size:16px;font-weight:bold;color:#fff;letter-spacing:0px;white-space:pre;width:151px;text-align:center">SAVE</div>
</div></div>
</body></html>
